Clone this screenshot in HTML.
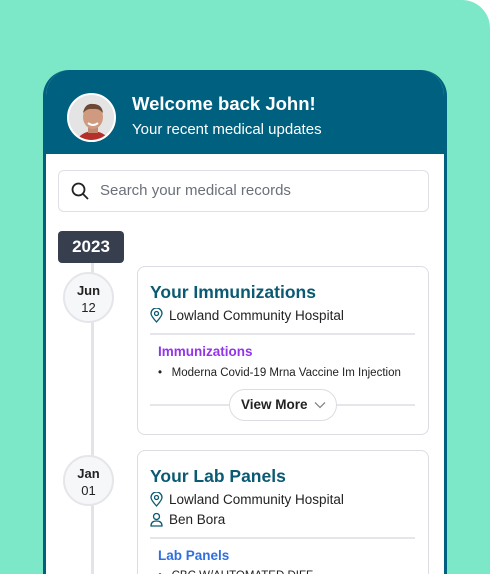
<!DOCTYPE html>
<html style="width:490px;height:574px;overflow:hidden"><head><style>
*{margin:0;padding:0;box-sizing:border-box}
body{width:490px;height:574px;overflow:hidden;background:#fff;font-family:"Liberation Sans",sans-serif;position:relative}
.bg{position:absolute;left:0;top:0;width:490px;height:574px;background:#7de8c8;border-radius:0 28px 0 0}
.phone{position:absolute;left:43px;top:70px;width:404px;height:504px;background:#fff;border:3px solid #00607f;border-top:none;border-bottom:none;border-radius:26px 26px 0 0;overflow:hidden}
.hdr{position:absolute;left:0;top:0;width:404px;height:84px;background:#00607f}
.av{position:absolute;left:21px;top:23px;width:49px;height:49px;border-radius:50%;background:#e6e6e6;border:2px solid #fff;overflow:hidden}
.t1{position:absolute;left:86px;top:23px;color:#fff;font-weight:bold;font-size:18.5px}
.t2{position:absolute;left:86px;top:51px;color:#fff;font-size:15px}
.abs{position:absolute}
.search{left:12px;top:100px;width:371px;height:42px;border:1.5px solid #dfdfe6;border-radius:6px}
.search span{position:absolute;left:41px;top:11px;font-size:15px;color:#6b6f7a}
.yr{left:12px;top:161px;width:66px;height:32px;background:#373f4f;border-radius:4px;color:#fff;font-weight:bold;font-size:17px;text-align:center;line-height:32px}
.line{left:45px;top:192px;width:3px;height:400px;background:#e3e3e8}
.circ{width:51px;height:51px;border-radius:50%;background:#f6f7f9;border:2px solid #e5e5ea;text-align:center;font-size:13px;color:#222;padding-top:8px;line-height:17px}
.card{left:91px;width:292px;border:1.5px solid #dcdce3;border-radius:8px;background:#fff}
.ct{position:absolute;left:12px;font-size:17.5px;font-weight:bold;color:#0b5a73}
.row{position:absolute;left:12px;font-size:13.5px;color:#222}
.row svg{vertical-align:-3px;margin-right:6px}
.div{position:absolute;left:12px;width:265px;height:2px;background:#e5e5ea}
</style></head><body>
<div class="bg"></div>
<div class="phone">
 <div class="hdr">
  <div class="av"><svg width="49" height="49" viewBox="0 0 49 49"><rect width="49" height="49" fill="#e4e4e4"/><path d="M6 49 Q10 37 24 36 Q38 37 42 49Z" fill="#b5302a"/><rect x="19" y="28" width="10" height="10" fill="#c48a70"/><ellipse cx="24" cy="22" rx="10" ry="12" fill="#cf9a7f"/><path d="M14 18 Q16 8 24 9 Q33 9 34 18 Q30 13 24 14 Q18 13 14 18Z" fill="#6a4a35"/><path d="M19 28 Q24 32 29 28" stroke="#fff" stroke-width="2" fill="none"/></svg></div>
  <div class="t1">Welcome back John!</div>
  <div class="t2">Your recent medical updates</div>
 </div>
 <div class="abs search"><svg class="abs" style="left:12px;top:11px" width="18" height="18" viewBox="0 0 18 18"><circle cx="7.5" cy="7.5" r="6" stroke="#222" stroke-width="1.8" fill="none"/><path d="M12 12l5 5" stroke="#222" stroke-width="1.8"/></svg><span>Search your medical records</span></div>
 <div class="abs line"></div>
 <div class="abs yr">2023</div>
 <div class="abs circ" style="left:17px;top:202px"><b>Jun</b><br>12</div>
 <div class="abs circ" style="left:17px;top:385px"><b>Jan</b><br>01</div>
 <div class="abs card" style="top:196px;height:169px">
  <div class="ct" style="top:15px">Your Immunizations</div>
  <div class="row" style="top:41px"><svg width="13" height="15" viewBox="0 0 13 15"><path d="M6.5 14 C2 9 1 7 1 5.5 A5.5 5.5 0 0 1 12 5.5 C12 7 11 9 6.5 14Z" fill="none" stroke="#0b5a73" stroke-width="1.3"/><circle cx="6.5" cy="5.5" r="2" fill="none" stroke="#0b5a73" stroke-width="1.3"/></svg>Lowland Community Hospital</div>
  <div class="div" style="top:66px"></div>
  <div class="abs" style="left:20px;top:77px;font-size:13.5px;font-weight:bold;color:#9333ea">Immunizations</div>
  <div class="abs" style="left:20px;top:100px;font-size:11.5px;color:#222">•&nbsp;&nbsp;&nbsp;Moderna Covid-19 Mrna Vaccine Im Injection</div>
  <div class="div" style="top:137px;height:1.5px"></div>
  <div class="abs" style="left:91px;top:122px;width:108px;height:32px;border:1.5px solid #dcdce3;border-radius:16px;background:#fff;font-size:13.5px;font-weight:bold;color:#222;line-height:29px;padding-left:11px">View More <svg width="12" height="8" viewBox="0 0 12 8" style="margin-left:3px"><path d="M1 1.5l5 5 5-5" stroke="#888" stroke-width="1.3" fill="none"/></svg></div>
 </div>
 <div class="abs card" style="top:380px;height:200px">
  <div class="ct" style="top:15px">Your Lab Panels</div>
  <div class="row" style="top:41px"><svg width="13" height="15" viewBox="0 0 13 15"><path d="M6.5 14 C2 9 1 7 1 5.5 A5.5 5.5 0 0 1 12 5.5 C12 7 11 9 6.5 14Z" fill="none" stroke="#0b5a73" stroke-width="1.3"/><circle cx="6.5" cy="5.5" r="2" fill="none" stroke="#0b5a73" stroke-width="1.3"/></svg>Lowland Community Hospital</div>
  <div class="row" style="top:61px"><svg width="13" height="15" viewBox="0 0 13 15"><circle cx="6.5" cy="4.5" r="3" fill="none" stroke="#0b5a73" stroke-width="1.3"/><path d="M1 14 Q1 9 6.5 9 Q12 9 12 14Z" fill="none" stroke="#0b5a73" stroke-width="1.3"/></svg>Ben Bora</div>
  <div class="div" style="top:86px"></div>
  <div class="abs" style="left:20px;top:97px;font-size:13.5px;font-weight:bold;color:#2f6fe0">Lab Panels</div>
  <div class="abs" style="left:20px;top:119px;font-size:11.5px;color:#222">•&nbsp;&nbsp;&nbsp;CBC W/AUTOMATED DIFF</div>
 </div>
</div>
</body></html>
